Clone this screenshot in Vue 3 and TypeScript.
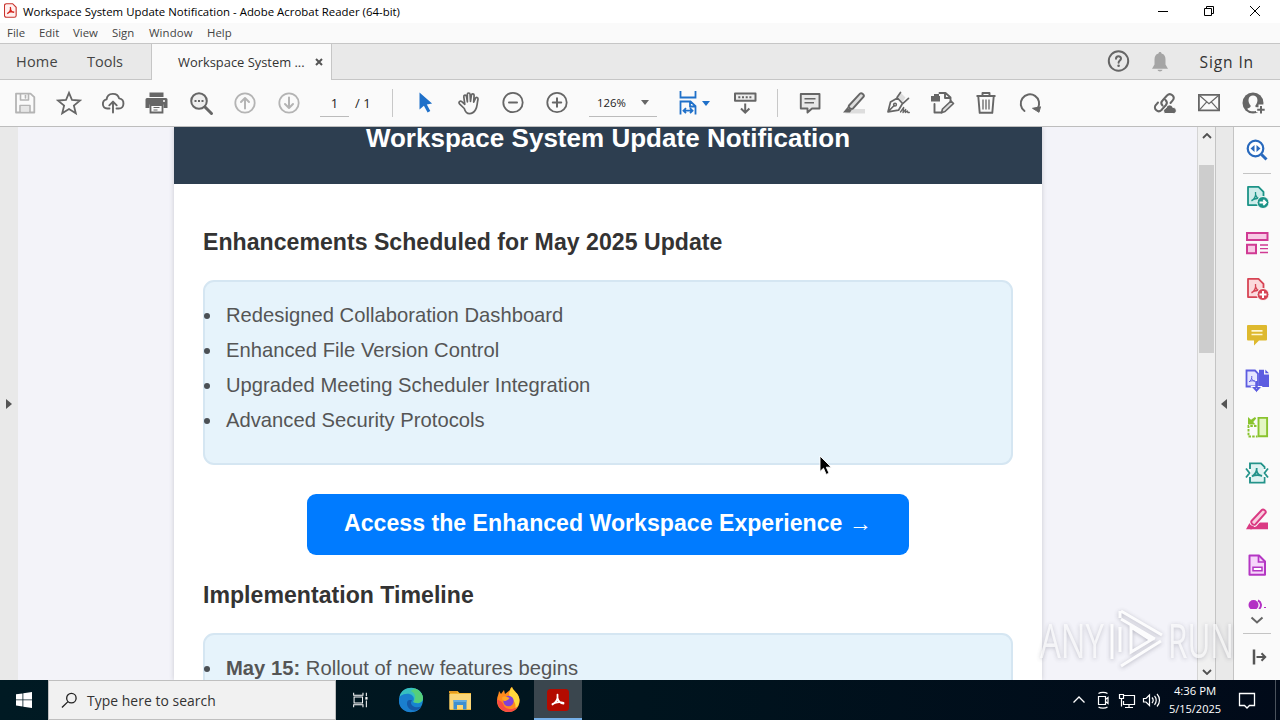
<template>
  <div class="desktop">
    <header class="titlebar">
      <svg class="app-icon" viewBox="0 0 14 16">
        <path d="M2.500.7h6.800l3.800 3.800v8.800a2 2 0 0 1-2 2h-8.600a2 2 0 0 1-2-2V2.700a2 2 0 0 1 2-2z" fill="#fff0ef" stroke="#c8322c" stroke-width="1.200" />
        <path d="M3.500 11.500c3-1.800 4-5 3.300-7.300M6.700 6.200c.5 2.200 2 3.700 4.300 3.900M3.500 11.300c1.500-1.700 4.500-2.400 7.500-1.600" fill="none" stroke="#d5261f" stroke-width="1.400" />
      </svg>
      <span class="title">Workspace System Update Notification - Adobe Acrobat Reader (64-bit)</span>
      <div class="window-buttons">
        <svg viewBox="0 0 12 12"><path d="M1 6.500h10" /></svg>
        <svg viewBox="0 0 12 12"><path d="M1.500 3.500h7v7h-7zM3.500 3.500v-2h7v7h-2" /></svg>
        <svg viewBox="0 0 12 12"><path d="M1 1l10 10M11 1L1 11" /></svg>
      </div>
    </header>

    <nav class="menubar">
      <span v-for="item in menu" :key="item" :class="item.toLowerCase()">{{ item }}</span>
    </nav>

    <div class="tabs">
      <span class="tab home">Home</span>
      <span class="tab tools">Tools</span>
      <div class="tab active">
        <span>Workspace System ...</span>
        <svg class="close" viewBox="0 0 8 8"><path d="M1 1l6 6M7 1L1 7" /></svg>
      </div>
      <div class="account">
        <svg class="icon help" viewBox="0 0 26 26" v-html="icons.help" />
        <svg class="icon bell" viewBox="0 0 26 26" v-html="icons.bell" />
        <span class="sign-in">Sign In</span>
      </div>
    </div>

    <div class="toolbar">
      <div v-for="name in fileTools" :key="name" class="tool">
        <svg class="icon" viewBox="0 0 26 26" v-html="icons[name]" />
      </div>
      <div class="pager">
        <span class="page-input">1</span>
        <span class="page-total">/ 1</span>
        <i class="separator"></i>
      </div>
      <div v-for="name in viewTools" :key="name" class="tool">
        <svg class="icon" viewBox="0 0 26 26" v-html="icons[name]" />
      </div>
      <div class="zoom">
        <span>126%</span>
        <i class="caret"></i>
      </div>
      <div class="fit">
        <svg class="icon" viewBox="0 0 26 26" v-html="icons.fit" />
        <i class="caret blue"></i>
      </div>
      <div class="tool">
        <svg class="icon" viewBox="0 0 26 26" v-html="icons.keyboard" />
      </div>
      <i class="separator wide"></i>
      <div v-for="name in editTools" :key="name" class="tool">
        <svg class="icon" viewBox="0 0 26 26" v-html="icons[name]" />
      </div>
      <div class="share">
        <div v-for="name in shareTools" :key="name" class="tool">
          <svg class="icon" viewBox="0 0 26 26" v-html="icons[name]" />
        </div>
      </div>
    </div>

    <main class="workspace">
      <div class="gutter left"><i class="arrow-right"></i></div>
      <div class="canvas">
        <article class="page">
          <div class="page-header">Workspace System Update Notification</div>
          <h2>Enhancements Scheduled for May 2025 Update</h2>
          <ul class="panel">
            <li v-for="text in enhancements" :key="text">{{ text }}</li>
          </ul>
          <a class="cta">Access the Enhanced Workspace Experience →</a>
          <h2 class="timeline">Implementation Timeline</h2>
          <ul class="panel second">
            <li><b>May 15:</b> Rollout of new features begins</li>
          </ul>
        </article>
      </div>
      <div class="scrollbar">
        <svg viewBox="0 0 10 6"><path d="M1 5l4-4 4 4" /></svg>
        <div class="thumb"></div>
        <svg class="down" viewBox="0 0 10 6"><path d="M1 1l4 4 4-4" /></svg>
      </div>
      <div class="gutter right"><i class="arrow-left"></i></div>
      <aside class="side">
        <div class="side-item first"><svg class="icon" viewBox="0 0 26 26" v-html="icons.find" /></div>
        <i class="rule"></i>
        <div v-for="name in sideTools" :key="name" class="side-item">
          <svg class="icon" viewBox="0 0 26 26" v-html="icons[name]" />
        </div>
        <div class="side-more">
          <svg viewBox="0 0 26 10" class="cut">
            <circle cx="9.500" cy="6" r="5" fill="#b32fc4" />
            <path d="M14 1.500a5 5 0 0 1 1 8.500" fill="none" stroke="#b32fc4" stroke-width="2" />
            <path d="M20 8.500h2" stroke="#b32fc4" />
          </svg>
          <svg viewBox="0 0 14 8" class="chevron"><path d="M1.500 1.500L7 6.500l5.500-5" /></svg>
        </div>
        <i class="rule"></i>
        <div class="side-item last"><svg class="icon" viewBox="0 0 26 26" v-html="icons.collapse" /></div>
      </aside>
    </main>

    <footer class="taskbar">
      <div class="start">
        <svg viewBox="0 0 16 16"><path d="M0 2.300l6.500-.9v6.100H0zM7.300 1.300L16 0v7.500H7.300zM0 8.300h6.500v6.200L0 13.600zM7.300 8.300H16V16l-8.700-1.300z" /></svg>
      </div>
      <div class="search">
        <svg viewBox="0 0 18 18"><circle cx="11" cy="6.500" r="5" /><path d="M7.400 10.200L1 16.500" /></svg>
        <span>Type here to search</span>
      </div>
      <div v-for="name in taskApps" :key="name" class="task" :class="name">
        <svg class="icon" viewBox="0 0 26 26" v-html="icons[name]" />
      </div>
      <div class="tray">
        <svg v-for="name in trayIcons" :key="name" viewBox="0 0 24 24" v-html="icons[name]" />
      </div>
      <div class="clock">
        <span class="time">4:36 PM</span>
        <span class="date">5/15/2025</span>
      </div>
      <svg class="notify" viewBox="0 0 24 24"><path d="M4.500 5.500h15v12h-5L12 20l-2.500-2.500h-5z" /></svg>
      <i class="show-desktop"></i>
    </footer>

    <svg class="watermark" viewBox="0 0 200 70">
      <text x="3" y="53" textLength="64" lengthAdjust="spacingAndGlyphs">ANY</text>
      <text x="131" y="53" textLength="66" lengthAdjust="spacingAndGlyphs">RUN</text>
      <path d="M83 22v25M75 19v35M84 6l41 24M84 14l34 20M124 36L84 61M83 6v7M94 22v25l20-12z" />
    </svg>

    <svg class="cursor" viewBox="0 0 14 21">
      <path d="M1 1v15.500l3.500-3.300 2.700 6.200 2.800-1.200-2.700-6h4.900z" fill="#000" stroke="#fff" stroke-width=".9" />
    </svg>
  </div>
</template>

<script setup lang="ts">
const menu = ['File', 'Edit', 'View', 'Sign', 'Window', 'Help']
const fileTools = ['save', 'star', 'cloud', 'print', 'search', 'up', 'down']
const viewTools = ['pointer', 'hand', 'minus', 'plus']
const editTools = ['comment', 'highlight', 'pen', 'edit', 'trash', 'rotate']
const shareTools = ['link', 'mail', 'user']
const sideTools = ['exportPdf', 'organize', 'createPdf', 'note', 'combine', 'crop', 'compress', 'redact', 'form']
const taskApps = ['taskview', 'edge', 'explorer', 'firefox', 'acrobat']
const trayIcons = ['trayUp', 'meet', 'network', 'volume']

const enhancements = [
  'Redesigned Collaboration Dashboard',
  'Enhanced File Version Control',
  'Upgraded Meeting Scheduler Integration',
  'Advanced Security Protocols',
]

const line = (color: string, width = 1.8) =>
  `fill="none" stroke="${color}" stroke-width="${width}" stroke-linejoin="round" stroke-linecap="round"`
const gray = '#666'
const pale = '#b4b4b4'
const trefoil = 'M7.500 17c3-2 4.500-5.500 4-9M11.700 11c.8 2.500 2.500 4 5 4M7.500 16.500c2.500-1.800 6-2.500 9.300-1.500'

const icons: Record<string, string> = {
  help: `<circle cx="12.500" cy="12" r="9.700" ${line(gray, 2)}/><path d="M10 9.800c0-3.200 5-3.200 5-.3 0 2-2.400 2-2.400 4.200" ${line(gray, 2)}/><circle cx="12.600" cy="16.800" r="1.300" fill="${gray}"/>`,
  bell: `<path d="M13 3c1 0 1.500.6 1.500 1.500 3 .8 4 3 4 6v5l2.500 4.200H5L7.500 15.500v-5c0-3 1-5.200 4-6 0-.9.500-1.500 1.500-1.500zM10.500 20.800h5c-.5 2.200-4.500 2.200-5 0z" fill="#a5a5a5"/>`,
  save: `<path d="M4 3.700h14.500l3.800 3.500v15.300H4z" ${line(pale)}/><path d="M8.500 4v6h8V4M8 22v-6.500h10V22" ${line(pale, 1.600)}/><path d="M13.500 5.500v2.500" ${line(pale, 1.600)}/><path d="M9 16.500h8v5H9z" fill="#e6e6e6"/>`,
  star: `<path d="M13 2.800l3 7.200 8 .6-6.100 5 1.900 7.600-6.800-4.200-6.800 4.200 1.900-7.600-6.100-5 8-.6z" fill="none" stroke="${gray}" stroke-width="1.800"/>`,
  cloud: `<path d="M9.500 18.500H7.200a4.600 4.600 0 0 1-.6-9.100c.8-7.200 11-7.200 12.500-1 6 .7 5.700 10.100-.3 10.100h-2.300M13 22.500V12M9.300 15.300L13 11.600l3.700 3.700" ${line(gray, 1.900)}/>`,
  print: `<path d="M5.500 2.500h14V7h-14zM3 8h19a1.500 1.500 0 0 1 1.500 1.500V18h-4v-3.500h-14V18h-4V9.500A1.500 1.500 0 0 1 3 8z" fill="${gray}"/><path d="M6.500 15h12v7.500h-12z" fill="#fafafa" stroke="${gray}" stroke-width="1.800"/><path d="M9.500 17.500h6M9.500 20h4" stroke="${gray}" stroke-width="1.200"/><circle cx="20" cy="11" r="1" fill="#fff"/>`,
  search: `<circle cx="11" cy="11" r="7.800" fill="#eee" stroke="${gray}" stroke-width="2"/><path d="M17 17l6.500 6.500" ${line(gray, 3)}/><path d="M6.500 11h2M10 11h2M13.500 11h2" stroke="${gray}" stroke-width="2"/>`,
  up: `<circle cx="13" cy="13" r="9.700" ${line(pale)}/><path d="M13 18.500V8.500M9 12l4-4 4 4" ${line(pale, 2)}/>`,
  down: `<circle cx="13" cy="13" r="9.700" ${line(pale)}/><path d="M13 7.500v10M9 14l4 4 4-4" ${line(pale, 2)}/>`,
  pointer: `<path d="M7.500 2.500v17l4.400-3.700 3.700 6.700 2.700-1.500-3.500-6.500 5.300-1z" fill="#1f70c9"/>`,
  hand: `<path d="M8.300 18.500L3.500 13.800c-1.500-1.700.7-3.400 2.300-2.100l3 2.600-1-7.500c-.2-2 2.300-2.300 2.700-.3l.9 5.300-.1-7.300c0-2 2.700-2 2.800 0l.4 7 .9-6.300c.3-1.900 2.900-1.600 2.700.3l-.4 6.600 1.700-3.700c.7-1.700 3-.9 2.600.9-1.200 5.200-.6 7.500-2.500 10.500-1.500 2.500-3 3.900-6 3.900s-4.200-1.500-5.200-5.200z" ${line(gray, 1.700)}/>`,
  minus: `<circle cx="13" cy="12.500" r="9.700" ${line(gray)}/><path d="M9 12.500h8" ${line(gray, 2)}/>`,
  plus: `<circle cx="13" cy="12.500" r="9.700" ${line(gray)}/><path d="M8.800 12.500h8.400M13 8.300v8.400" ${line(gray, 2)}/>`,
  fit: `<path d="M5.500 1v6.500h15V1M5.500 24.500V11.500h10l5 4.700v8.300M15 11.500v5h5.500M8.500 20.700h9M11 18.200l-2.500 2.500 2.500 2.500M15 18.200l2.500 2.500-2.500 2.500" fill="none" stroke="#1f70c9" stroke-width="1.800"/>`,
  keyboard: `<path d="M3 3.500h20.500v7.300H3z" fill="#eee" stroke="${gray}" stroke-width="2" stroke-linejoin="round"/><path d="M6.300 7.200h14.500" stroke="${gray}" stroke-width="2" stroke-dasharray="2 1.700"/><path d="M13.200 13.500v9M9 18.500l4.200 4.200 4.200-4.200" fill="none" stroke="${gray}" stroke-width="2"/>`,
  comment: `<path d="M3.800 4h18.700v14.500h-7.500L10.500 22.500v-4H3.800z" fill="#e8e8e8" stroke="${gray}" stroke-width="1.900" stroke-linejoin="round"/><path d="M7.500 8.800h11M7.500 12.800h9.500" stroke="${gray}" stroke-width="1.500"/>`,
  highlight: `<path d="M10 19h14v4.500H4z" fill="#ddd"/><path d="M8 15.500L19 3.700c1.500-1.500 4.800 1 3.600 3L12 18.500c-2 1.200-5.200-1-4-3z" fill="#ddd" stroke="${gray}" stroke-width="1.900"/><path d="M7 16.500c0 2 2 3.500 4 3l-2 3H2z" fill="${gray}"/>`,
  pen: `<path d="M13 6.500l2.500-4 5 5-3.500 5z" fill="#ddd"/><path d="M3 21.800l2.500-9.800L12.500 8l5 5.500-4 6.700zM3.200 21.500l6-6M12 7.500l3.500-5M18 13.300l5.500-5" ${line(gray, 1.700)}/><circle cx="10" cy="14.700" r="1.400" fill="none" stroke="${gray}" stroke-width="1.500"/><path d="M15.500 22l3.200-4.500-.7 5 2.700-3-.3 3 2-1.500.4 1.500h1.500" ${line(gray, 1.300)}/>`,
  edit: `<path d="M10.500 3h6l5 4.500v4M16 3v5h5.500M5.500 14v8.500h7" ${line(gray, 1.900)}/><path d="M2 6h9v5.500H2zM5 4h5v3H5z" fill="${gray}"/><path d="M12.500 22.700l1-3.700L22 11l2.500 2.500-8.500 8z" fill="#ddd" stroke="${gray}" stroke-width="1.700" stroke-linejoin="round"/>`,
  trash: `<path d="M3.500 6h19" stroke="${gray}" stroke-width="2"/><path d="M9.500 5.500V3h7v2.500M5.300 6.500l1.400 16.300h12.600l1.400-16.300" ${line(gray, 1.900)}/><path d="M10 9.500v10M13 9.500v10M16 9.500v10" stroke="${gray}" stroke-width="1.300"/>`,
  rotate: `<path d="M7.500 21A9.200 9.200 0 1 1 20.700 18.500" ${line(gray, 2)}/><path d="M15.500 18.300l8-1.500-1.500 5.500z" fill="${gray}" stroke="${gray}"/>`,
  link: `<path d="M10.500 15.500c-2-2-1.500-3.500 0-5l4.500-5c3.500-3.500 9 1.300 5.500 5.200l-2 2.300M13.500 10c2 2 1.700 3.500.5 5l-4.500 5c-3.500 3.500-9-1.500-5.500-5.200l2-2.300" ${line(gray, 2)}/><path d="M13 23.500a3 3 0 0 1 1-5.500c1.500-4.500 6-3.500 6.700-.7 4.600.3 4.600 6.200 1 6.200z" fill="${gray}" stroke="#fafafa"/>`,
  mail: `<path d="M2.900 4.900h20.200v15.500H2.900z" fill="none" stroke="${gray}" stroke-width="1.800"/><path d="M3.500 5.500l9.500 8.200 9.500-8.200M3.500 19.800l7-7.700M22.500 19.800l-7-7.700" fill="none" stroke="${gray}" stroke-width="1.200"/>`,
  user: `<circle cx="13" cy="13" r="10.500" fill="${gray}"/><path d="M10.700 15.700C7 11.500 8.200 5.500 13 5.500s6 6 2.300 10.200c0 1.800 1 2 3.500 3-2 3.500-9.600 3.500-11.600 0 2.500-1 3.500-1.200 3.500-3z" fill="#fafafa"/><path d="M21 14.500v10M16 19.800h10" stroke="#fafafa" stroke-width="5"/><path d="M21 16v7.500M17.200 19.800h7.500" stroke="${gray}" stroke-width="2"/>`,
  find: `<circle cx="11.500" cy="11.500" r="7.800" fill="#fff" stroke="#2869bd" stroke-width="2.200"/><path d="M17.500 17.500l5 5" stroke="#2869bd" stroke-width="3"/><path d="M10.500 8v7l-4-3.500zM12.500 8v7l4-3.500z" fill="#2869bd"/>`,
  exportPdf: `<path d="M4 2.900h10.500l5 5v13.200H4z" fill="#cdecea" stroke="#1c9387" stroke-width="1.800" stroke-linejoin="round"/><path d="${trefoil}" fill="none" stroke="#1c9387" stroke-width="1.300"/><circle cx="19" cy="18.500" r="6" fill="#1c9387" stroke="#fafafa"/><path d="M15.500 18.500h6M19.300 16l2.500 2.500-2.500 2.500" fill="none" stroke="#fff" stroke-width="1.800"/>`,
  organize: `<path d="M3 3h20.500v7H3zM3 14.700h9v8.500H3z" fill="#f8c9e5" stroke="#d03a93" stroke-width="2"/><path d="M16 15h8M16 18.700h8M16 22.500h8" stroke="#d03a93" stroke-width="1.300"/>`,
  createPdf: `<path d="M4 2.900h10.500l5 5v13.200H4z" fill="#fbd9dc" stroke="#d74454" stroke-width="1.800" stroke-linejoin="round"/><path d="${trefoil}" fill="none" stroke="#d74454" stroke-width="1.300"/><circle cx="19" cy="18.500" r="6" fill="#d74454" stroke="#fafafa"/><path d="M15.500 18.500h7M19 15v7" stroke="#fff" stroke-width="2"/>`,
  note: `<path d="M4 3h18a1 1 0 0 1 1 1v13.500a1 1 0 0 1-1 1h-7L10 23.500v-5H4a1 1 0 0 1-1-1V4a1 1 0 0 1 1-1z" fill="#deb92e"/><path d="M7.500 8.800h11M7.500 12.500h11" stroke="#fff6cf" stroke-width="1.700"/>`,
  combine: `<path d="M2.500 2.500h8.500l3 3v13H2.500z" fill="#e4e4ff" stroke="#5c5ce0" stroke-width="1.800"/><path d="M5 14c2-1.500 3-3.500 2.800-6M7.800 10.500c.5 1.500 1.500 2.500 3 2.700M5 13.700c2-1 4-1.200 6-.6" fill="none" stroke="#5c5ce0"/><path d="M15 1.700h5v4.800h5v12.500H15zM21.300 1.500L25 5.300h-3.700z" fill="#5c5ce0"/><path d="M12.500 11.500v9M7 18.500l5.500 6 5.500-6z" fill="#5c5ce0" stroke="#fafafa" stroke-width="1"/><path d="M12.500 13v7" stroke="#5c5ce0" stroke-width="2.500"/>`,
  crop: `<path d="M14.500 3.900h8.600v18.300h-8.600z" fill="#e4f6c4" stroke="#89c32e" stroke-width="1.900"/><path d="M12.500 12H4.500v10.500h9" fill="none" stroke="#89c32e" stroke-width="1.900" stroke-dasharray="2.500 1.200"/><path d="M4 3v7.500h7.500L9.200 8l3-3.500L11 3 7 5.800z" fill="#89c32e"/>`,
  compress: `<path d="M6 9V3.500h11l3.500 3.500v2M6 17v5.500h14.500V17" fill="none" stroke="#23938a" stroke-width="1.900"/><path d="M7 4.500h9.500l3 3v14H7z" fill="#dff3f2"/><path d="M8 16.500c3-2 5-5 4.700-8.500M12.700 11c.7 2.500 2.500 4.500 5.300 5M8 16.300c3-1.500 6-1.800 10-.5M2 8.500l3.500 4.500L2 17.500M24 8.500L20.500 13l3.500 4.500" fill="none" stroke="#23938a" stroke-width="1.800"/>`,
  redact: `<path d="M12 16.500h12v6.700H6z" fill="#da3a83"/><path d="M7.500 15L17.800 4c1.500-1.500 5 1 3.700 3L11.300 18.500c-1.800 1.200-5-1.500-3.800-3.500z" fill="#f9cfe0" stroke="#fafafa" stroke-width="4"/><path d="M7.500 15L17.800 4c1.500-1.500 5 1 3.700 3L11.300 18.500c-1.800 1.200-5-1.500-3.800-3.500z" fill="#f9cfe0" stroke="#da3a83" stroke-width="1.900"/><path d="M5.500 17c.5 2 2 3 4.500 3l-2 3.200H2z" fill="#da3a83"/>`,
  form: `<path d="M5.500 3.500h9.500l6 6v13.200H5.500z" fill="#f6d5fa" stroke="#b436c3" stroke-width="2" stroke-linejoin="round"/><path d="M14.500 4v6H21" fill="none" stroke="#b436c3" stroke-width="1.700"/><path d="M9 15.300h9v3.400H9z" fill="#fff" stroke="#b436c3" stroke-width="1.500"/>`,
  collapse: `<path d="M10 5.500v15" stroke="#555" stroke-width="2.500"/><path d="M12.500 13h8.500M17.500 9.300l3.700 3.700-3.700 3.700" fill="none" stroke="#555" stroke-width="2"/>`,
  taskview: `<path d="M5.500 4.500v3h11v-3M5.500 21.500v-3h11v3M6 9.500h10v7H6zM20.500 4.500v4M20.500 13.500v8" fill="none" stroke="#fff" stroke-width="1.200"/><path d="M19.300 9.500h2.600v3h-2.600z" fill="#fff"/>`,
  edge: `<circle cx="13" cy="13" r="12" fill="#1785cf"/><path d="M1.500 10C4-3 24-2 25 11c0 6-7 6-10 4 3-5-2-9-7-8-3 .3-5.500 1.500-6.500 3z" fill="#36bfc0"/><path d="M17 1.500c5 2 8 6 8 9.500 0 5-6 6-9.500 4 3.500-5 1-10-3-11z" fill="#55cf7a"/><path d="M1 13c1-7 13-8 14 0-5-1-7 5-1 8.500 4 1.500 7 .5 9.500-1.500C17 29 0 26 1 13z" fill="#1a7fce"/><path d="M9.500 14c-2 5 2 10 8 9.500 3-.8 4.500-2 6-4-5 2-10.500 0-10.500-3.700 0-1 .5-1.700 1-2.300-1.500-1-3.500-.3-4.500.5z" fill="#155aa8"/>`,
  explorer: `<path d="M2.500 4h8l2 2H24v17H2.500z" fill="#f3b62f"/><path d="M2.500 7H24v15H2.500z" fill="#fad678"/><path d="M6.500 13h13v9.500H16V18h-6v4.500H6.500z" fill="#3d8fd0"/><path d="M6.500 13h13v2h-13z" fill="#62abe0"/><path d="M2 4h8v2H2z" fill="#e39a20"/>`,
  firefox: `<path d="M4 4l2 3 3-4 1 4 5-4c0-2 1-2 2-3 1 4 7 6 7.500 13S20 25 13.500 25 1.500 20 2 13c.2-4 2-6 2-9z" fill="#ff8a1e"/><path d="M17 0c1 4 7 6 7.500 13 0 4-2 7-4 9 1-8-4-10-6-13-1-3 1-7 2.500-9z" fill="#ffd93b"/><path d="M2 12c0 8 5 13 11.500 13 4 0 7-2 9-5-5 3-12 3-14-2-1-4-4-4-6.500-6z" fill="#f84a45"/><circle cx="13.500" cy="14" r="5.200" fill="#8141d8"/><path d="M7.500 10c3-1 5 0 7 1-1 2-3 2-4 3-3 0-4-2-3-4z" fill="#ffa526"/>`,
  acrobat: `<rect x="2" y="2" width="22" height="22" rx="3.500" fill="#b30b00"/><path d="M7.500 17.500c3.500-2 5.500-6 5-9.800M12.500 11c.8 3 3 5.300 6 5.600M7.500 17c3.500-2 7-2.500 11-1.200" ${line('#fff', 1.800)}/>`,
  trayUp: `<path d="M6.500 14.500l5.500-5.500 5.500 5.500" fill="none" stroke="#fff" stroke-width="1.300"/>`,
  meet: `<path d="M7.500 8.500h7v8h-7zM14.500 11.500l2.500-2v6l-2.500-2M7.500 5.500c2-1.500 7-1.500 9 0M7.500 19c2 1.500 7 1.500 9 0" fill="none" stroke="#fff" stroke-width="1.200"/>`,
  network: `<path d="M9 7.500h10.500v9H8.500V13M14 17v2.500M10 19.500h8M4.500 6.500h4v4h-4zM6.500 10.500v8" fill="none" stroke="#fff" stroke-width="1.200"/>`,
  volume: `<path d="M4.500 10.500h2.500l3.500-3.500v10.500l-3.500-3.500H4.500zM13 9.500c1.300 1.500 1.300 4 0 5.500M15.500 7.800c2.300 2.500 2.300 6.500 0 9M18 6c3.300 3.500 3.300 9 0 12.500" fill="none" stroke="#fff" stroke-width="1.200"/>`,
}
</script>

<style>
body {
  margin: 0;
  overflow: hidden;
}
</style>

<style scoped>
.desktop {
  position: relative;
  display: flex;
  flex-direction: column;
  width: 1280px;
  height: 720px;
  overflow: hidden;
  background: #fff;
  color: #222;
  font-family: "Open Sans", "Noto Sans", sans-serif;
  white-space: nowrap;
}

svg {
  display: block;
  flex: none;
}

.icon {
  width: 26px;
  height: 26px;
}

.titlebar {
  display: flex;
  align-items: center;
  height: 23px;
  padding-left: 4px;
  box-sizing: border-box;
}

.app-icon {
  width: 13px;
  height: 15px;
  margin-bottom: 2px;
}

.title {
  margin-left: 6px;
  font-size: 11.4px;
  letter-spacing: 0.015px;
  color: #000;
}

.window-buttons {
  display: flex;
  gap: 34px;
  margin-left: auto;
  padding-right: 19px;
  padding-bottom: 2px;
}

.window-buttons svg {
  width: 12px;
  height: 12px;
  fill: none;
  stroke: #000;
  stroke-width: 1;
}

.menubar {
  display: flex;
  align-items: center;
  height: 20px;
  padding: 0 0 2px 7px;
  box-sizing: border-box;
  background: #fafafa;
  font-size: 11.4px;
  color: #444;
}

.menubar span { width: 34px; }
.menubar .file { width: 32px; }
.menubar .view { width: 39px; }
.menubar .sign { width: 37px; }
.menubar .window { width: 58px; letter-spacing: 0.1px; }

.tabs {
  display: flex;
  height: 37px;
  box-sizing: border-box;
  border-top: 1px solid #c6c6c6;
  border-bottom: 1px solid #c6c6c6;
  background: #e9e9e9;
}

.tab {
  display: flex;
  align-items: center;
  color: #444;
  font-size: 14.5px;
}

.home { width: 71px; padding-left: 16px; letter-spacing: 0.2px; }
.tools { width: 64px; }

.tab.active {
  box-sizing: border-box;
  width: 181px;
  height: 36px;
  padding-left: 26px;
  border-left: 1px solid #c6c6c6;
  border-right: 1px solid #c6c6c6;
  background: #fafafa;
  font-size: 12.9px;
  color: #333;
}

.close {
  width: 8px;
  height: 8px;
  margin-left: 10px;
  fill: none;
  stroke: #555;
  stroke-width: 2;
}

.account {
  display: flex;
  align-items: center;
  margin-left: auto;
  padding-right: 26px;
}

.bell { margin-left: 15px; }

.sign-in {
  margin-left: 27px;
  font-size: 15.6px;
  letter-spacing: 0.85px;
  color: #333;
}

.toolbar {
  display: flex;
  align-items: center;
  height: 47px;
  padding: 0 5px 0 3px;
  box-sizing: border-box;
  border-bottom: 1px solid #bdbdbd;
  background: #fafafa;
}

.tool {
  display: flex;
  justify-content: center;
  width: 44px;
}

.pager {
  display: flex;
  align-items: center;
  width: 92px;
  font-size: 13px;
  color: #222;
}

.page-input {
  box-sizing: border-box;
  width: 29px;
  height: 27px;
  margin-left: 9px;
  border-bottom: 1px solid #bbb;
  line-height: 27px;
  text-align: center;
}

.page-total { margin-left: 6px; }

.separator {
  width: 1px;
  height: 28px;
  margin-left: auto;
  margin-right: 10px;
  background: #c8c8c8;
}

.separator.wide { margin: 0 10px; }

.zoom {
  display: flex;
  align-items: center;
  box-sizing: border-box;
  width: 68px;
  height: 27px;
  margin: 0 10px;
  padding-left: 8px;
  border-bottom: 1px solid #bbb;
  font-size: 11.4px;
}

.caret {
  margin-left: 15px;
  border: 4px solid transparent;
  border-top: 5px solid #666;
  border-bottom: 0;
}

.caret.blue {
  margin-left: 1px;
  border-top-color: #1f70c9;
}

.fit {
  display: flex;
  align-items: center;
  box-sizing: border-box;
  width: 56px;
  padding-left: 8px;
}

.share {
  display: flex;
  margin-left: auto;
}

.workspace {
  display: flex;
  height: 553px;
}

.gutter {
  display: flex;
  align-items: center;
  justify-content: center;
  box-sizing: border-box;
  width: 18px;
  background: #e9e9e9;
}

.gutter.right {
  border-left: 1px solid #c4c4c4;
  border-right: 1px solid #c4c4c4;
  width: 19px;
  padding-right: 2px;
}

.arrow-right {
  border: 5px solid transparent;
  border-left: 6px solid #555;
  border-right: 0;
}

.arrow-left {
  border: 5px solid transparent;
  border-right: 6px solid #555;
  border-left: 0;
}

.canvas {
  width: 1179px;
  padding-left: 156px;
  box-sizing: border-box;
  overflow: hidden;
  background: #f3f3f9;
}

.page {
  box-sizing: border-box;
  width: 868px;
  height: 553px;
  padding: 0 29px;
  background: #fff;
  box-shadow: 0 0 5px #c9c9d2;
  font-family: "Liberation Sans", Arial, sans-serif;
  letter-spacing: 0.02px;
}

.page-header {
  height: 57px;
  margin: 0 -29px;
  background: #2d3e50;
  color: #fff;
  font-size: 26px;
  font-weight: bold;
  line-height: 23px;
  text-align: center;
}

h2 {
  margin: 42px 0 22px;
  font-size: 23.1px;
  line-height: 32px;
  color: #333;
}

.panel {
  box-sizing: border-box;
  width: 810px;
  height: 185px;
  margin: 0;
  padding: 16px 0 0 21px;
  border: 2px solid #d5e6f2;
  border-radius: 11px;
  background: #e6f3fb;
  list-style: none;
  color: #555;
  font-size: 20.2px;
  line-height: 35px;
}

.panel.second { height: 120px; }

.panel li {
  display: flex;
  align-items: center;
  white-space: pre;
}

.panel li::before {
  content: "";
  width: 6px;
  height: 6px;
  margin: 1px 16px 0 -22px;
  border-radius: 50%;
  background: #4b5055;
}

.cta {
  display: block;
  box-sizing: border-box;
  width: 602px;
  height: 61px;
  margin: 29px 0 0 104px;
  padding-left: 37px;
  border-radius: 9px;
  background: #007bff;
  color: #fff;
  font-size: 23.1px;
  font-weight: bold;
  line-height: 58px;
}

.timeline { margin-top: 24px; }

.scrollbar {
  display: flex;
  flex-direction: column;
  align-items: center;
  box-sizing: border-box;
  width: 18px;
  padding: 6px 0 5px;
  border-left: 1px solid #d4d4d4;
  background: #f0f0f0;
}

.scrollbar svg {
  width: 10px;
  height: 6px;
  fill: none;
  stroke: #505050;
  stroke-width: 1.8;
}

.thumb {
  width: 15px;
  height: 188px;
  margin-top: 26px;
  background: #cdcdcd;
}

.scrollbar .down { margin-top: auto; }

.side {
  display: flex;
  flex-direction: column;
  align-items: center;
  width: 46px;
  overflow: hidden;
  background: #fafafa;
}

.side-item {
  display: flex;
  flex: none;
  align-items: center;
  height: 46px;
}

.rule {
  width: 28px;
  height: 1px;
  flex: none;
  background: #c4c4c4;
}

.side-item.last { height: 46px; }

.side-more {
  display: flex;
  flex: none;
  flex-direction: column;
  align-items: center;
  height: 45px;
  padding-top: 11px;
  box-sizing: border-box;
}

.cut {
  width: 26px;
  height: 10px;
}

.chevron {
  width: 14px;
  height: 8px;
  margin-top: 7px;
  fill: none;
  stroke: #666;
  stroke-width: 2;
}

.taskbar {
  display: flex;
  align-items: center;
  height: 40px;
  background: linear-gradient(90deg, #001a23, #00141e 50%, #010a19);
  color: #fff;
}

.start {
  width: 48px;
}

.start svg {
  width: 16px;
  height: 16px;
  margin-left: 16px;
  fill: #fff;
}

.search {
  display: flex;
  align-items: center;
  box-sizing: border-box;
  width: 288px;
  height: 40px;
  padding-left: 12px;
  border: 1px solid #bfbfbf;
  background: #f1f1f1;
  color: #333;
  font-size: 13.9px;
}

.search svg {
  width: 17px;
  height: 17px;
  fill: none;
  stroke: #222;
  stroke-width: 1.4;
}

.search span {
  margin-left: 9px;
  letter-spacing: 0.05px;
}

.task {
  display: flex;
  align-items: center;
  justify-content: center;
  box-sizing: border-box;
  height: 40px;
}

.task.taskview { width: 49px; }
.task.edge { width: 52px; }
.task.explorer { width: 46px; }
.task.firefox { width: 51px; }

.task.taskview .icon {
  width: 22px;
  height: 22px;
  margin-right: 2px;
}

.task.firefox .icon { margin-right: 2px; }

.task.acrobat {
  width: 48px;
  padding-top: 2px;
  border-bottom: 2px solid #76b0e8;
  background: #3a464e;
}

.tray {
  display: flex;
  margin-left: auto;
}

.tray svg {
  width: 24px;
  height: 24px;
}

.clock {
  display: flex;
  flex-direction: column;
  align-items: center;
  width: 64px;
  font-size: 11.3px;
  line-height: 18px;
}

.date {
  font-size: 11px;
}

.notify {
  width: 24px;
  height: 24px;
  margin-left: 8px;
  fill: none;
  stroke: #fff;
  stroke-width: 1.3;
}

.show-desktop {
  width: 4px;
  height: 40px;
  margin-left: 16px;
  border-left: 1px solid #4a525c;
}

.watermark {
  position: absolute;
  left: 1037px;
  top: 605px;
  width: 200px;
  height: 70px;
  overflow: visible;
  fill: rgba(255, 255, 255, 0.8);
  filter: drop-shadow(0 1px 2px rgba(90, 90, 110, 0.5));
  opacity: 0.8;
}

.watermark text {
  font-family: "Open Sans", sans-serif;
  font-size: 47px;
}

.watermark path {
  fill: none;
  stroke: #fff;
  stroke-width: 3;
}

.cursor {
  position: absolute;
  left: 819px;
  top: 455px;
  width: 14px;
  height: 21px;
}
</style>
